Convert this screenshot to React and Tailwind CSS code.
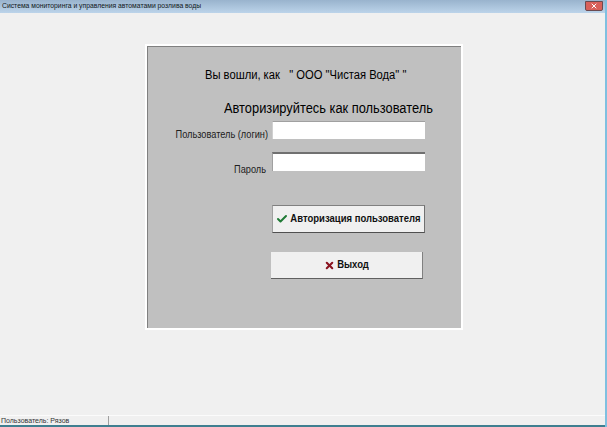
import { Check, X } from "lucide-react";

function App() {
  return (
    <div className="w-[607px] h-[427px] flex flex-col bg-[#f0f0f0] overflow-hidden font-['Liberation_Sans',Arial,sans-serif] border-r-2 border-r-[#7fc0e0]">
      {/* title bar */}
      <div className="h-[13px] shrink-0 flex items-center justify-between pl-[2px] pr-[2px] bg-gradient-to-b from-[#99b3cd] to-[#bcd4ea]">
        <span className="text-[6.8px] leading-none text-[#101820]">
          Система мониторинга и управления автоматами розлива воды
        </span>
        <div className="w-[18px] h-[10px] mb-[1px] flex items-center justify-center bg-[#d8605a] border border-[#6b4a50] rounded-b-[2px]">
          <X size={8} strokeWidth={3} className="text-white" />
        </div>
      </div>

      <div className="flex-1 pl-[145px] pt-[31px]">
        {/* login panel */}
        <div className="w-[318px] h-[286px] bg-[#c0c0c0] border-2 border-white shadow-[inset_1px_1px_0_#808080]">
          <div className="mt-[20px] ml-[58px] text-[11.2px] leading-[16px] text-black whitespace-pre scale-y-[1.15] origin-center">
            Вы вошли, как   " ООО "Чистая Вода" "
          </div>
          <div className="mt-[17px] ml-[77px] text-[12.85px] leading-[17px] text-black whitespace-nowrap scale-y-[1.15] origin-center">
            Авторизируйтесь как пользователь
          </div>

          <div className="mt-[5px] flex">
            <label className="w-[123px] pr-[2px] pt-[7px] text-right text-[9.2px] leading-[13px] text-[#202020] whitespace-nowrap scale-y-[1.15]">
              Пользователь (логин)
            </label>
            <input className="ml-[2px] w-[153px] h-[18px] bg-white border-t border-l border-t-[#a0a0a0] border-l-[#d0d0d0] outline-none" />
          </div>
          <div className="mt-[13px] flex">
            <label className="w-[119px] pt-[9px] text-right text-[9.2px] leading-[13px] text-[#202020] scale-y-[1.15]">
              Пароль
            </label>
            <input className="ml-[6px] -mt-[2px] w-[153px] h-[19px] bg-white border-t-2 border-l border-t-[#707070] border-l-[#a0a0a0] outline-none" />
          </div>

          <button className="mt-[29px] ml-[125px] w-[153px] h-[28px] flex items-center justify-center gap-[2px] bg-[#f0f0f0] border border-t-[#808080] border-l-[#a0a0a0] border-r-[#707070] border-b-[#505050] text-[9.5px] font-bold text-[#101010] whitespace-nowrap">
            <Check size={12} strokeWidth={4} className="text-[#1f7a35]" />
            <span className="scale-y-[1.15]">Авторизация пользователя</span>
          </button>
          <button className="mt-[19px] ml-[124px] w-[152px] h-[27px] flex items-center justify-center gap-[2px] bg-[#f0f0f0] border-r border-b border-r-[#808080] border-b-[#606060] text-[9.5px] font-bold text-[#101010]">
            <X size={11} strokeWidth={4.5} className="text-[#8a1420]" />
            <span className="scale-y-[1.15]">Выход</span>
          </button>
        </div>
      </div>

      {/* status bar */}
      <div className="h-[9px] shrink-0 flex items-center border-t border-t-[#fbfbfb] bg-[#f0f0f0] box-content">
        <span className="w-[109px] h-full pl-[1px] text-[7px] leading-[9px] text-[#333] border-r border-r-[#a0a0a0] whitespace-nowrap">
          Пользователь: Рязов
        </span>
      </div>
      <div className="h-[2px] shrink-0 bg-[#3f7f90]"></div>
    </div>
  );
}

export default App;
